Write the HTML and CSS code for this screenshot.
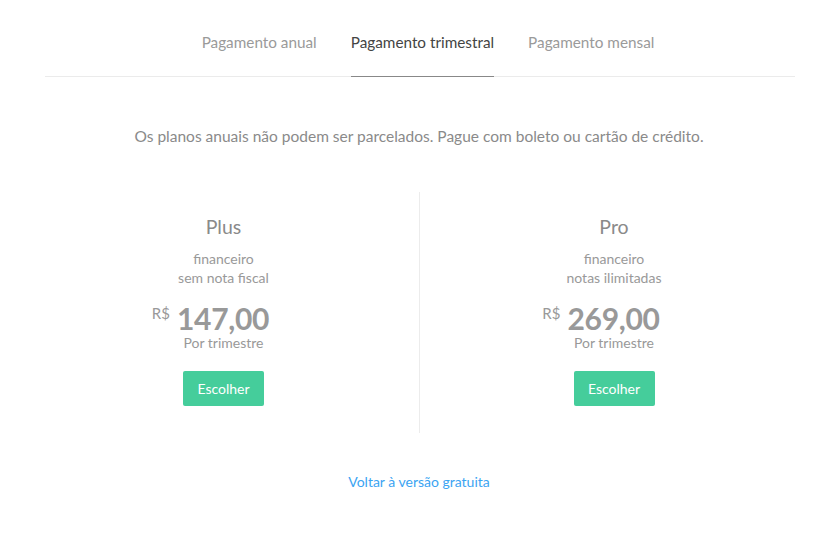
FILE: index.html
```html
<!DOCTYPE html>
<html lang="pt-BR">
<head>
<meta charset="utf-8">
<link rel="stylesheet" href="styles.css">
</head>
<body>
<div class="page">
  <nav class="tabs">
    <a class="tab">Pagamento anual</a>
    <a class="tab active">Pagamento trimestral</a>
    <a class="tab">Pagamento mensal</a>
  </nav>
  <p class="notice">Os planos anuais não podem ser parcelados. Pague com boleto ou cartão de crédito.</p>
  <div class="plans">
    <div class="plan">
      <h2 class="plan-name">Plus</h2>
      <p class="plan-desc">financeiro<br>sem nota fiscal</p>
      <div class="price"><span class="currency">R$</span><span class="amount">147,00</span></div>
      <p class="period">Por trimestre</p>
      <button class="choose">Escolher</button>
    </div>
    <div class="plan">
      <h2 class="plan-name">Pro</h2>
      <p class="plan-desc">financeiro<br>notas ilimitadas</p>
      <div class="price"><span class="currency">R$</span><span class="amount">269,00</span></div>
      <p class="period">Por trimestre</p>
      <button class="choose">Escolher</button>
    </div>
  </div>
  <a class="back">Voltar à versão gratuita</a>
</div>
</body>
</html>
```

FILE: styles.css
```css
* { box-sizing: border-box; }
html, body { margin: 0; padding: 0; background: #fff; }
body {
  font-family: Lato, "Open Sans", sans-serif;
  color: #888;
}
.page {
  width: 838px;
  display: flex;
  flex-direction: column;
  align-items: center;
}
.tabs {
  width: 750px;
  margin-left: 1px;
  display: flex;
  justify-content: center;
  gap: 34px;
  border-bottom: 1px solid #ebebeb;
  padding-top: 33px;
  padding-left: 17px;
}
.tab {
  font-size: 15.3px;
  color: #9a9a9a;
  padding-bottom: 25px;
  border-bottom: 1px solid transparent;
  margin-bottom: -1px;
  cursor: pointer;
}
.tab.active {
  color: #444;
  border-bottom-color: #888;
}
.notice {
  margin: 50px 0 0;
  font-size: 15.5px;
  color: #8a8a8a;
}
.plans {
  display: flex;
  margin-top: 47px;
}
.plan {
  width: 390px;
  height: 241px;
  display: flex;
  flex-direction: column;
  align-items: center;
  padding-top: 22px;
}
.plan + .plan { border-left: 1px solid #ececec; }
.plans .plan:first-child { margin-left: -1px; }
.plan-name {
  margin: 0;
  font-size: 19.5px;
  font-weight: 400;
  color: #8a8a8a;
  line-height: 26px;
}
.plan-desc {
  margin: 9px 0 0;
  font-size: 14px;
  line-height: 19px;
  text-align: center;
  color: #999;
}
.price {
  display: flex;
  align-items: flex-start;
  margin-top: 17px;
  margin-left: -26px;
}
.currency {
  font-size: 15px;
  color: #999;
  margin-top: 0;
  margin-right: 7px;
  line-height: 18px;
}
.amount {
  font-size: 30px;
  font-weight: 700;
  color: #999;
  line-height: 28px;
  letter-spacing: -0.3px;
}
.period {
  margin: 3px 0 0;
  font-size: 14px;
  color: #999;
  line-height: 16px;
}
.choose {
  margin-top: 20px;
  width: 81px;
  height: 35px;
  border: none;
  border-radius: 2px;
  background: #45cd9b;
  color: #fff;
  font-family: inherit;
  font-size: 14px;
  cursor: pointer;
}
.back {
  margin-top: 40px;
  font-size: 14px;
  color: #3ba4f2;
  cursor: pointer;
}
```
